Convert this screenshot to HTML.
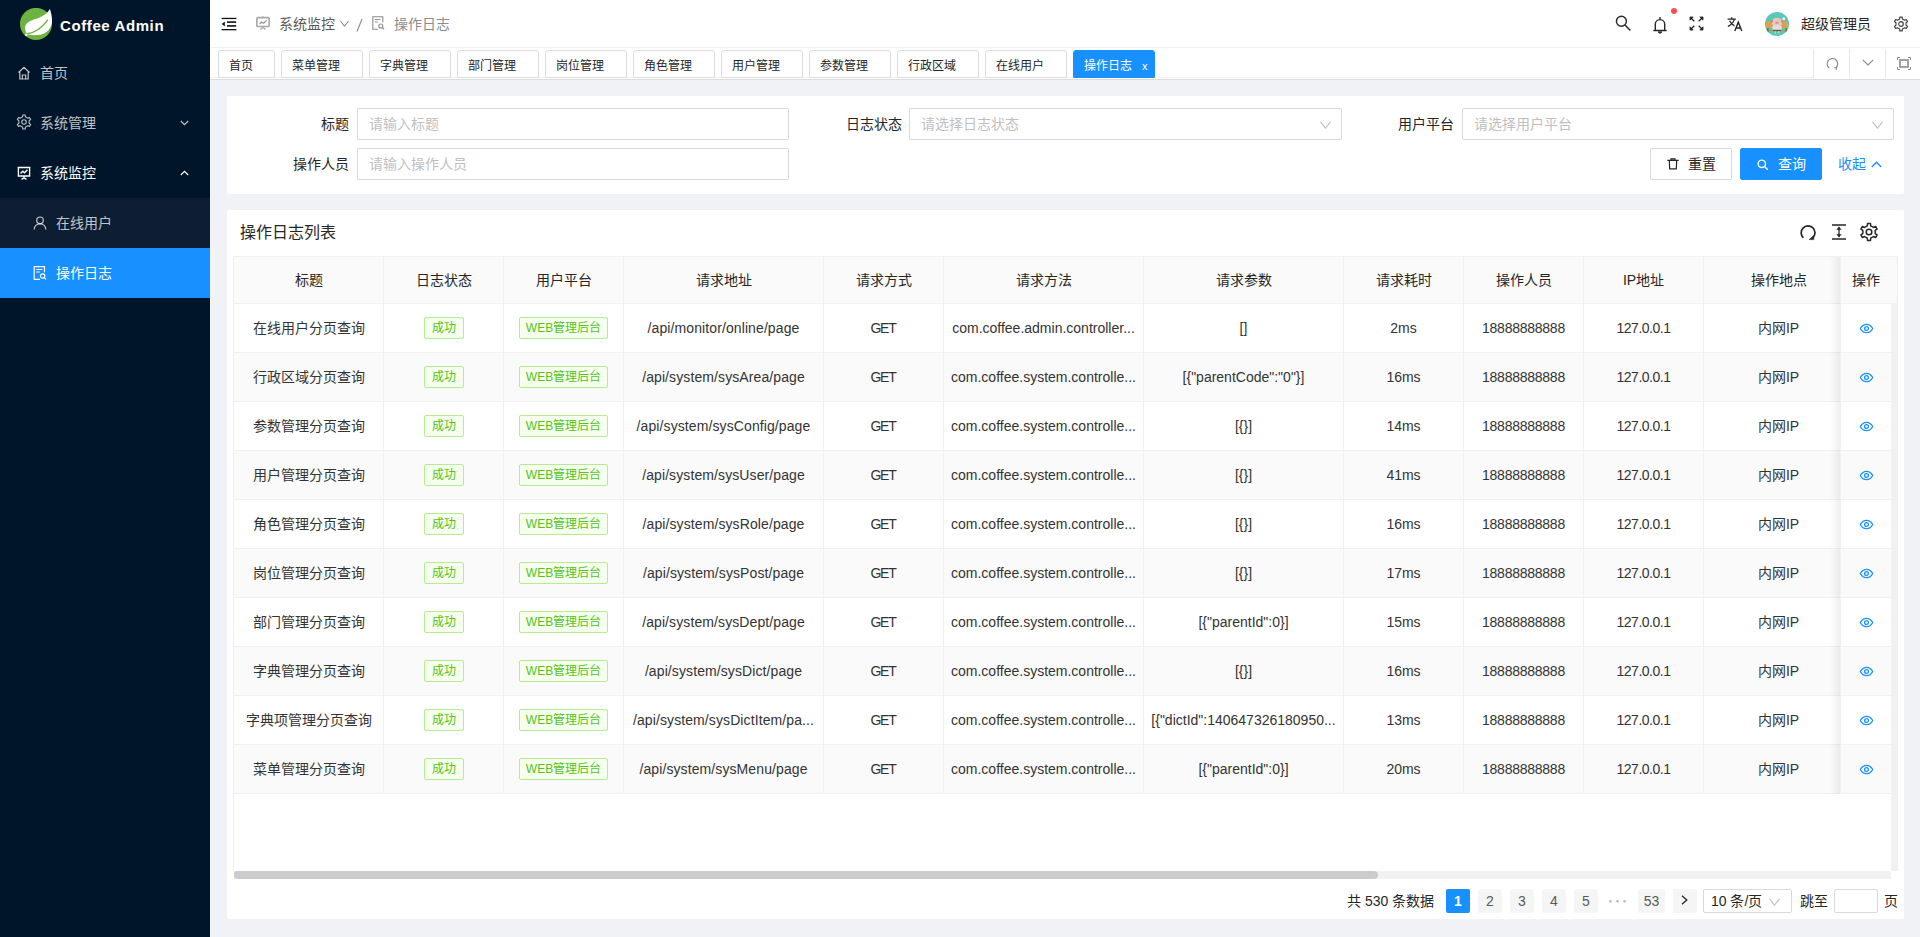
<!DOCTYPE html>
<html lang="zh-CN">
<head>
<meta charset="utf-8">
<style>
*{box-sizing:border-box;margin:0;padding:0}
html,body{width:1920px;height:937px;overflow:hidden}
body{font-family:"Liberation Sans",sans-serif;font-size:14px;color:#262626;background:#f0f2f5;position:relative}
.abs{position:absolute}
svg{display:block}
/* sidebar */
#side{position:absolute;left:0;top:0;width:210px;height:937px;background:#001529}
.logo-t{position:absolute;left:60px;top:16px;color:#fff;font-weight:bold;font-size:15px;line-height:20px;letter-spacing:0.6px;white-space:nowrap}
.mi{position:absolute;left:0;width:210px;height:50px;color:rgba(255,255,255,.75);line-height:50px}
.mi .ic{position:absolute;left:17px;top:18px}
.mi .tx{position:absolute;left:40px;top:0}
.mi .ar{position:absolute;left:180px;top:22px}
.sub{background:#0d1e33}
.sub .ic{left:33px}
.sub .tx{left:56px}
.sel{background:#1890ff;color:#fff}
/* header */
#hdr{position:absolute;left:210px;top:0;width:1710px;height:48px;background:#fff;border-bottom:1px solid #f0f0f0}
#tabs{position:absolute;left:210px;top:48px;width:1710px;height:32px;background:#fff;border-bottom:1px solid #dcdcdc}
.tab{position:absolute;top:2px;height:28px;border:1px solid #dcdcdc;border-radius:3px 3px 2px 2px;background:#fff;line-height:31px;padding-left:10px;font-size:12px;color:#262626}
.tab.act{background:#1890ff;border-color:#1890ff;color:#fff;border-radius:3px 3px 0 0}
.tsep{position:absolute;top:1px;width:1px;height:29px;background:#e8e8e8}
/* cards */
.card{position:absolute;background:#fff;border-radius:2px}
.lbl{position:absolute;height:32px;line-height:32px;text-align:right;color:#262626}
.inp{position:absolute;height:32px;border:1px solid #d9d9d9;border-radius:2px;background:#fff;line-height:30px;padding-left:11px;color:#bfbfbf}
.btn{position:absolute;height:32px;border:1px solid #d9d9d9;border-radius:2px;background:#fff;line-height:30px;text-align:center}
/* table */
#tbl{position:absolute;left:233px;top:256px;width:1665px;height:615px;border-left:1px solid #f0f0f0;border-top:1px solid #f0f0f0}
.row{position:absolute;left:0;height:49px;border-bottom:1px solid #f0f0f0;color:#333}
.cell{position:absolute;top:0;height:48px;line-height:48px;text-align:center;border-right:1px solid #f0f0f0;white-space:nowrap;overflow:hidden}
.hrow .cell{background:#fafafa;color:#262626}
.tag{display:inline-block;height:22px;line-height:20px;border:1px solid #b7eb8f;background:#f6ffed;color:#52c41a;font-size:12px;padding:0 7px;border-radius:2px;vertical-align:middle;position:relative;top:-1px}.tw{padding:0 6px}
.t-url{letter-spacing:0.1px}.t-ip{letter-spacing:-0.5px}.t-ph{letter-spacing:-0.25px}.t-get{letter-spacing:-1.2px;margin-right:1px}
.pg{position:absolute;top:889px;height:24px;line-height:24px;text-align:center;background:#f5f5f5;border-radius:2px;color:#595959}
</style>
</head>
<body>
<!-- SIDEBAR -->
<div id="side">
  <svg class="abs" style="left:20px;top:8px" width="34" height="34" viewBox="0 0 34 34">
    <circle cx="16" cy="15.9" r="16" fill="#6db33f"/>
    <path d="M29.8 1.1 C27 6 23 8.5 17 10.5 C10 12.5 5 15 5 20 C5 23 6.2 25 8 26.6 C14 27.6 21 27.4 25 25 C30 22 32.4 17 32 11 C31.7 7 30.8 3.5 29.8 1.1Z" fill="#fff"/>
    <path d="M7.3 25.8 Q18.5 24.5 27.6 12.2" fill="none" stroke="#6db33f" stroke-width="1.4" stroke-linecap="round"/>
    <circle cx="6.3" cy="26.8" r="1.3" fill="#fff"/>
  </svg>
  <div class="logo-t">Coffee Admin</div>

  <div class="mi" style="top:48px">
    <svg class="ic" width="14" height="14" viewBox="0 0 14 14" fill="none" stroke="currentColor" stroke-width="1.2"><path d="M1.5 6.5 L7 1.3 L12.5 6.5 M2.8 5.4 V13 H11.2 V5.4 M5.3 13 V9 H8.7 V13"/></svg>
    <span class="tx">首页</span>
  </div>
  <div class="mi" style="top:98px">
    <svg class="ic" style="left:16px;top:16px" width="16" height="16" viewBox="0 0 16 16" fill="none" stroke="currentColor" stroke-width="1.1" stroke-linejoin="round"><circle cx="8" cy="8" r="2.2"/><path d="M6.60 2.89 L6.78 1.01 L9.22 1.01 L9.40 2.89 L11.73 4.23 L13.45 3.45 L14.67 5.56 L13.13 6.66 L13.13 9.34 L14.67 10.44 L13.45 12.55 L11.73 11.77 L9.40 13.11 L9.22 14.99 L6.78 14.99 L6.60 13.11 L4.27 11.77 L2.55 12.55 L1.33 10.44 L2.87 9.34 L2.87 6.66 L1.33 5.56 L2.55 3.45 L4.27 4.23Z"/></svg>
    <span class="tx">系统管理</span>
    <svg class="ar" width="9" height="6" viewBox="0 0 9 6" fill="none" stroke="currentColor" stroke-width="1.2"><path d="M0.8 1 L4.5 4.6 L8.2 1"/></svg>
  </div>
  <div class="mi" style="top:148px;color:#fff">
    <svg class="ic" width="14" height="14" viewBox="0 0 14 14" fill="none" stroke="currentColor" stroke-width="1.35"><path d="M0.6 1.5h12.8 M1.4 1.5v8.5h11.2V1.5 M7 10v1.8 M4.5 13.3l2.5-1.5 2.5 1.5 M3.5 7.5l2.3-2.3 1.7 1.5 3-3"/></svg>
    <span class="tx">系统监控</span>
    <svg class="ar" width="9" height="6" viewBox="0 0 9 6" fill="none" stroke="currentColor" stroke-width="1.2"><path d="M0.8 5 L4.5 1.4 L8.2 5"/></svg>
  </div>
  <div class="mi sub" style="top:198px">
    <svg class="ic" width="14" height="14" viewBox="0 0 14 14" fill="none" stroke="currentColor" stroke-width="1.2"><circle cx="7" cy="4.3" r="3.3"/><path d="M1.2 13.4c0-3.3 2.6-5.6 5.8-5.6s5.8 2.3 5.8 5.6"/></svg>
    <span class="tx">在线用户</span>
  </div>
  <div class="mi sub sel" style="top:248px">
    <svg class="ic" width="14" height="14" viewBox="0 0 14 14" fill="none" stroke="currentColor" stroke-width="1.2"><path d="M7 13.3H1.2V0.7h10.3v5.5 M3.3 3.5h6 M3.3 6h3.5"/><circle cx="9.6" cy="10" r="2.2"/><path d="M11.2 11.6l1.8 1.8"/></svg>
    <span class="tx">操作日志</span>
  </div>
</div>

<!-- HEADER -->
<div id="hdr">
  <svg class="abs" style="left:11px;top:17px" width="16" height="14" viewBox="0 0 16 14" fill="#111"><rect x="0.6" y="0.8" width="14.8" height="1.3"/><rect x="6" y="4.3" width="9.2" height="1.6"/><rect x="6" y="8.1" width="9.2" height="1.6"/><rect x="0.6" y="12" width="14.8" height="1.3"/><path d="M0.8 7 L3.8 4.5 V9.5Z"/></svg>
  <svg class="abs" style="left:46px;top:16px" width="14" height="15" viewBox="0 0 14 15" fill="none" stroke="#a6a6a6"><path d="M7 0.2v1.4" stroke-width="1.3"/><rect x="0.9" y="1.6" width="12.2" height="8.9" rx="0.8" stroke-width="1.6"/><path d="M3.5 8.2 L5.6 6 L7.6 7.3 L10.6 4.3" stroke-width="1.2" stroke="#8c8c8c"/><path d="M7 10.5v1 M4.3 13.6 L7 11.6 L9.7 13.6" stroke-width="1.2"/></svg>
  <span class="abs" style="left:69px;top:1px;line-height:47px;color:#595959">系统监控</span>
  <svg class="abs" style="left:130px;top:20px;color:#8c8c8c" width="9" height="7" viewBox="0 0 9 7" fill="none" stroke="currentColor" stroke-width="1.1"><path d="M0.5 1 L4.5 6 L8.5 1"/></svg>
  <svg class="abs" style="left:146px;top:18px" width="7" height="14" viewBox="0 0 7 14" fill="none" stroke="#8c8c8c" stroke-width="1.1"><path d="M1 13.5 L6 1"/></svg>
  <svg class="abs" style="left:162px;top:16px;color:#8c8c8c" width="13" height="14" viewBox="0 0 13 14" fill="none" stroke="currentColor" stroke-width="1.1"><path d="M6 13.3H0.8V0.7h10v5.5 M2.8 3.5h5.5 M2.8 6h3"/><circle cx="8.8" cy="10" r="2"/><path d="M10.3 11.5l1.8 1.8"/></svg>
  <span class="abs" style="left:184px;top:1px;line-height:47px;color:#8c8c8c">操作日志</span>

  <svg class="abs" style="left:1405px;top:15px" width="16" height="17" viewBox="0 0 16 17" fill="none" stroke="#262626" stroke-width="1.4"><circle cx="6.4" cy="6.3" r="5"/><path d="M10 9.9 L15.3 15.5"/></svg>
  <svg class="abs" style="left:1443px;top:16px" width="14" height="18" viewBox="0 0 14 18" fill="none" stroke="#262626" stroke-width="1.4"><path d="M2.3 14.3V8.3a4.7 4.7 0 0 1 9.4 0v6 M0.4 14.5h13.2"/><path d="M5.6 15.6a1.4 1.4 0 0 0 2.8 0" fill="#262626"/><path d="M7 1.1v2"/></svg>
  <span class="abs" style="left:1461px;top:8px;width:6px;height:6px;border-radius:3px;background:#ff4d4f"></span>
  <svg class="abs" style="left:1479px;top:16px" width="15" height="15" viewBox="0 0 15 15" fill="none" stroke="#262626" stroke-width="1.3"><path d="M5.3 5.3 L1.2 1.2 M9.7 5.3 L13.8 1.2 M5.3 9.7 L1.2 13.8 M9.7 9.7 L13.8 13.8"/><path d="M1 4.2V1h3.2Z M14 4.2V1h-3.2Z M1 10.8V14h3.2Z M14 10.8V14h-3.2Z" fill="#262626" stroke-width="0.8"/></svg>
  <svg class="abs" style="left:1517px;top:17px" width="16" height="15" viewBox="0 0 16 15" fill="none" stroke="#262626" stroke-width="1.3"><path d="M4.6 0.3v1.6 M0.6 2.2h8.2 M7.2 2.6C6.2 5.6 4 8 0.9 9.4 M2.6 3.8c1.1 2.3 2.8 4 4.8 5"/><path d="M7.8 14 L11.3 5.2 L14.8 14 M9 11h4.6" stroke-width="1.4"/></svg>
  <span class="abs" style="left:1555px;top:12px;width:24px;height:24px;border-radius:12px;overflow:hidden"><svg width="24" height="24" viewBox="0 0 24 24"><g>
    <rect width="24" height="24" fill="#5cc7b6"/>
    <rect x="1" y="9.5" width="22" height="6.5" fill="#d9a24e"/>
    <rect x="1" y="18" width="22" height="1" fill="#c9913f"/>
    <rect x="2.5" y="16" width="0.8" height="4.5" fill="#4a3b30"/><rect x="20.7" y="16" width="0.8" height="4.5" fill="#4a3b30"/>
    <ellipse cx="12" cy="10.5" rx="5.2" ry="4.8" fill="#e9c9bd"/>
    <ellipse cx="12" cy="10.8" rx="2" ry="1.2" fill="#d99a98"/>
    <ellipse cx="6.8" cy="9.3" rx="1.2" ry="1.5" fill="#c98a78"/><ellipse cx="17.2" cy="9.3" rx="1.2" ry="1.5" fill="#c98a78"/>
    <rect x="7.3" y="13.3" width="9.4" height="5" rx="2" fill="#dedede"/>
    <rect x="8" y="17.8" width="8" height="1.4" fill="#6b5646"/>
    <rect x="9.6" y="19.2" width="1.2" height="2.4" fill="#e6d0c6"/><rect x="13.2" y="19.2" width="1.2" height="2.4" fill="#e6d0c6"/>
    <circle cx="18.7" cy="6.8" r="1.5" fill="#eef3ef"/>
  </g></svg></span>
  <span class="abs" style="left:1591px;top:1px;line-height:47px;color:#262626">超级管理员</span>
  <svg class="abs" style="left:1683px;top:16px" width="16" height="16" viewBox="0 0 16 16" fill="none" stroke="#434343" stroke-width="1.2" stroke-linejoin="round"><circle cx="8" cy="8" r="2.3"/><path d="M6.63 2.98 L6.80 1.10 L9.20 1.10 L9.37 2.98 L11.66 4.30 L13.37 3.51 L14.57 5.59 L13.03 6.68 L13.03 9.32 L14.57 10.41 L13.37 12.49 L11.66 11.70 L9.37 13.02 L9.20 14.90 L6.80 14.90 L6.63 13.02 L4.34 11.70 L2.63 12.49 L1.43 10.41 L2.97 9.32 L2.97 6.68 L1.43 5.59 L2.63 3.51 L4.34 4.30Z"/></svg>
</div>
<!-- TABS -->
<div id="tabs">
  <div class="abs" style="left:0;top:29px;width:1603px;height:1px;background:#f0f0f0"></div>
  <div class="tab" style="left:8px;width:57px">首页</div>
  <div class="tab" style="left:71px;width:82px">菜单管理</div>
  <div class="tab" style="left:159px;width:82px">字典管理</div>
  <div class="tab" style="left:247px;width:82px">部门管理</div>
  <div class="tab" style="left:335px;width:82px">岗位管理</div>
  <div class="tab" style="left:423px;width:82px">角色管理</div>
  <div class="tab" style="left:511px;width:82px">用户管理</div>
  <div class="tab" style="left:599px;width:82px">参数管理</div>
  <div class="tab" style="left:687px;width:82px">行政区域</div>
  <div class="tab" style="left:775px;width:82px">在线用户</div>
  <div class="tab act" style="left:863px;width:82px">操作日志<span class="abs" style="left:68px;top:1px;font-size:11px;line-height:29px">x</span></div>
  <div class="tsep" style="left:1603px"></div><div class="tsep" style="left:1639px"></div><div class="tsep" style="left:1675px"></div>
  <svg class="abs" style="left:1616px;top:9px" width="13" height="13" viewBox="0 0 13 13" fill="none" stroke="#8c8c8c" stroke-width="1.2"><path d="M10.5 10.2 A5.3 5.3 0 1 0 3.2 11"/><path d="M8.3 10.8 L10.6 10.4 L10.3 12.6" fill="none"/></svg>
  <svg class="abs" style="left:1652px;top:11px" width="12" height="7" viewBox="0 0 12 7" fill="none" stroke="#8c8c8c" stroke-width="1.2"><path d="M0.8 0.8 L6 6 L11.2 0.8"/></svg>
  <svg class="abs" style="left:1687px;top:9px" width="14" height="13" viewBox="0 0 14 13" fill="none" stroke="#8c8c8c" stroke-width="1"><path d="M0.5 3V0.5H3 M11 0.5h2.5V3 M0.5 10v2.5H3 M11 12.5h2.5V10"/><rect x="3" y="3" width="8" height="7" stroke-width="1.6"/></svg>
</div>

<!-- SEARCH CARD -->
<div class="card" style="left:227px;top:96px;width:1677px;height:98px">
  <div class="lbl" style="left:60px;top:12px;width:62px">标题</div>
  <div class="inp" style="left:130px;top:12px;width:432px">请输入标题</div>
  <div class="lbl" style="left:580px;top:12px;width:95px">日志状态</div>
  <div class="inp" style="left:682px;top:12px;width:433px">请选择日志状态
    <svg class="abs" style="left:410px;top:12px" width="11" height="8" viewBox="0 0 11 8" fill="none" stroke="#bfbfbf" stroke-width="1.1"><path d="M0.5 0.8 L5.5 7 L10.5 0.8"/></svg></div>
  <div class="lbl" style="left:1130px;top:12px;width:97px">用户平台</div>
  <div class="inp" style="left:1235px;top:12px;width:432px">请选择用户平台
    <svg class="abs" style="left:409px;top:12px" width="11" height="8" viewBox="0 0 11 8" fill="none" stroke="#bfbfbf" stroke-width="1.1"><path d="M0.5 0.8 L5.5 7 L10.5 0.8"/></svg></div>
  <div class="lbl" style="left:40px;top:52px;width:82px">操作人员</div>
  <div class="inp" style="left:130px;top:52px;width:432px">请输入操作人员</div>
  <div class="btn" style="left:1423px;top:52px;width:82px">
    <svg class="abs" style="left:16px;top:9px" width="12" height="12" viewBox="0 0 12 12" fill="none" stroke="#262626" stroke-width="1.2"><path d="M0.3 2.4h11.4 M4 2.4V0.9h4v1.5 M2.3 2.4l.4 8.4h6.6l.4-8.4"/></svg>
    <span class="abs" style="left:37px;top:0">重置</span></div>
  <div class="btn" style="left:1513px;top:52px;width:82px;background:#1890ff;border-color:#1890ff;color:#fff">
    <svg class="abs" style="left:16px;top:10px" width="12" height="12" viewBox="0 0 12 12" fill="none" stroke="#fff" stroke-width="1.4"><circle cx="4.8" cy="4.8" r="3.7"/><path d="M7.6 7.6 L10.8 10.8"/></svg>
    <span class="abs" style="left:37px;top:0">查询</span></div>
  <span class="abs" style="left:1611px;top:52px;line-height:32px;color:#1890ff">收起</span>
  <svg class="abs" style="left:1644px;top:65px" width="11" height="7" viewBox="0 0 11 7" fill="none" stroke="#1890ff" stroke-width="1.4"><path d="M0.8 6 L5.5 1.2 L10.2 6"/></svg>
</div>

<!-- TABLE CARD -->
<div class="card" style="left:227px;top:210px;width:1677px;height:709px">
  <span class="abs" style="left:13px;top:11px;font-size:16px;line-height:24px;color:#262626">操作日志列表</span>
  <svg class="abs" style="left:1572px;top:14px" width="18" height="17" viewBox="0 0 18 17" fill="none" stroke="#262626" stroke-width="1.7"><path d="M4.3 13.8 A6.9 6.9 0 1 1 14.2 13.4"/><path d="M10.2 15.6 L14.8 15.6 L14.6 11.5Z" fill="#262626" stroke-width="0.6"/></svg>
  <svg class="abs" style="left:1604px;top:13px" width="16" height="18" viewBox="0 0 16 18" fill="none" stroke="#262626" stroke-width="1.6"><path d="M1 2h14 M1 16h14"/><path d="M8 5v8" stroke-width="1.3"/><path d="M6 6.5 L8 3.8 L10 6.5Z M6 11.5 L8 14.2 L10 11.5Z" fill="#262626" stroke-width="0.6"/></svg>
  <svg class="abs" style="left:1632px;top:12px" width="20" height="20" viewBox="0 0 20 20" fill="none" stroke="#262626" stroke-width="1.5" stroke-linejoin="round"><circle cx="10" cy="10" r="2.8"/><path d="M8.31 3.83 L8.52 1.53 L11.48 1.53 L11.69 3.83 L14.50 5.45 L16.60 4.48 L18.08 7.04 L16.19 8.38 L16.19 11.62 L18.08 12.96 L16.60 15.52 L14.50 14.55 L11.69 16.17 L11.48 18.47 L8.52 18.47 L8.31 16.17 L5.50 14.55 L3.40 15.52 L1.92 12.96 L3.81 11.62 L3.81 8.38 L1.92 7.04 L3.40 4.48 L5.50 5.45Z"/></svg>
</div>
<div id="tbl">
<div class="hrow" style="position:absolute;left:0;top:0;width:1663px;height:47px;background:#fafafa;border-bottom:1px solid #f0f0f0">
<div class="cell" style="left:0px;width:150px;height:46px;line-height:46px">标题</div>
<div class="cell" style="left:150px;width:120px;height:46px;line-height:46px">日志状态</div>
<div class="cell" style="left:270px;width:120px;height:46px;line-height:46px">用户平台</div>
<div class="cell" style="left:390px;width:200px;height:46px;line-height:46px">请求地址</div>
<div class="cell" style="left:590px;width:120px;height:46px;line-height:46px">请求方式</div>
<div class="cell" style="left:710px;width:200px;height:46px;line-height:46px">请求方法</div>
<div class="cell" style="left:910px;width:200px;height:46px;line-height:46px">请求参数</div>
<div class="cell" style="left:1110px;width:120px;height:46px;line-height:46px">请求耗时</div>
<div class="cell" style="left:1230px;width:120px;height:46px;line-height:46px">操作人员</div>
<div class="cell" style="left:1350px;width:120px;height:46px;line-height:46px">IP地址</div>
<div class="cell" style="left:1470px;width:150px;height:46px;line-height:46px">操作地点</div>
</div>
<div class="row" style="top:47px;width:1656px;background:#fff">
<div class="cell" style="left:0px;width:150px">在线用户分页查询</div>
<div class="cell" style="left:150px;width:120px"><span class="tag">成功</span></div>
<div class="cell" style="left:270px;width:120px"><span class="tag tw">WEB管理后台</span></div>
<div class="cell" style="left:390px;width:200px"><span class="t-url">/api/monitor/online/page</span></div>
<div class="cell" style="left:590px;width:120px"><span class="t-get">GET</span></div>
<div class="cell" style="left:710px;width:200px"><span class="t-m">com.coffee.admin.controller...</span></div>
<div class="cell" style="left:910px;width:200px"><span class="t-p">[]</span></div>
<div class="cell" style="left:1110px;width:120px">2ms</div>
<div class="cell" style="left:1230px;width:120px"><span class="t-ph">18888888888</span></div>
<div class="cell" style="left:1350px;width:120px"><span class="t-ip">127.0.0.1</span></div>
<div class="cell" style="left:1470px;width:150px">内网IP</div>
</div>
<div class="row" style="top:96px;width:1656px;background:#fafafa">
<div class="cell" style="left:0px;width:150px">行政区域分页查询</div>
<div class="cell" style="left:150px;width:120px"><span class="tag">成功</span></div>
<div class="cell" style="left:270px;width:120px"><span class="tag tw">WEB管理后台</span></div>
<div class="cell" style="left:390px;width:200px"><span class="t-url">/api/system/sysArea/page</span></div>
<div class="cell" style="left:590px;width:120px"><span class="t-get">GET</span></div>
<div class="cell" style="left:710px;width:200px"><span class="t-m">com.coffee.system.controlle...</span></div>
<div class="cell" style="left:910px;width:200px"><span class="t-p">[{&quot;parentCode&quot;:&quot;0&quot;}]</span></div>
<div class="cell" style="left:1110px;width:120px">16ms</div>
<div class="cell" style="left:1230px;width:120px"><span class="t-ph">18888888888</span></div>
<div class="cell" style="left:1350px;width:120px"><span class="t-ip">127.0.0.1</span></div>
<div class="cell" style="left:1470px;width:150px">内网IP</div>
</div>
<div class="row" style="top:145px;width:1656px;background:#fff">
<div class="cell" style="left:0px;width:150px">参数管理分页查询</div>
<div class="cell" style="left:150px;width:120px"><span class="tag">成功</span></div>
<div class="cell" style="left:270px;width:120px"><span class="tag tw">WEB管理后台</span></div>
<div class="cell" style="left:390px;width:200px"><span class="t-url">/api/system/sysConfig/page</span></div>
<div class="cell" style="left:590px;width:120px"><span class="t-get">GET</span></div>
<div class="cell" style="left:710px;width:200px"><span class="t-m">com.coffee.system.controlle...</span></div>
<div class="cell" style="left:910px;width:200px"><span class="t-p">[{}]</span></div>
<div class="cell" style="left:1110px;width:120px">14ms</div>
<div class="cell" style="left:1230px;width:120px"><span class="t-ph">18888888888</span></div>
<div class="cell" style="left:1350px;width:120px"><span class="t-ip">127.0.0.1</span></div>
<div class="cell" style="left:1470px;width:150px">内网IP</div>
</div>
<div class="row" style="top:194px;width:1656px;background:#fafafa">
<div class="cell" style="left:0px;width:150px">用户管理分页查询</div>
<div class="cell" style="left:150px;width:120px"><span class="tag">成功</span></div>
<div class="cell" style="left:270px;width:120px"><span class="tag tw">WEB管理后台</span></div>
<div class="cell" style="left:390px;width:200px"><span class="t-url">/api/system/sysUser/page</span></div>
<div class="cell" style="left:590px;width:120px"><span class="t-get">GET</span></div>
<div class="cell" style="left:710px;width:200px"><span class="t-m">com.coffee.system.controlle...</span></div>
<div class="cell" style="left:910px;width:200px"><span class="t-p">[{}]</span></div>
<div class="cell" style="left:1110px;width:120px">41ms</div>
<div class="cell" style="left:1230px;width:120px"><span class="t-ph">18888888888</span></div>
<div class="cell" style="left:1350px;width:120px"><span class="t-ip">127.0.0.1</span></div>
<div class="cell" style="left:1470px;width:150px">内网IP</div>
</div>
<div class="row" style="top:243px;width:1656px;background:#fff">
<div class="cell" style="left:0px;width:150px">角色管理分页查询</div>
<div class="cell" style="left:150px;width:120px"><span class="tag">成功</span></div>
<div class="cell" style="left:270px;width:120px"><span class="tag tw">WEB管理后台</span></div>
<div class="cell" style="left:390px;width:200px"><span class="t-url">/api/system/sysRole/page</span></div>
<div class="cell" style="left:590px;width:120px"><span class="t-get">GET</span></div>
<div class="cell" style="left:710px;width:200px"><span class="t-m">com.coffee.system.controlle...</span></div>
<div class="cell" style="left:910px;width:200px"><span class="t-p">[{}]</span></div>
<div class="cell" style="left:1110px;width:120px">16ms</div>
<div class="cell" style="left:1230px;width:120px"><span class="t-ph">18888888888</span></div>
<div class="cell" style="left:1350px;width:120px"><span class="t-ip">127.0.0.1</span></div>
<div class="cell" style="left:1470px;width:150px">内网IP</div>
</div>
<div class="row" style="top:292px;width:1656px;background:#fafafa">
<div class="cell" style="left:0px;width:150px">岗位管理分页查询</div>
<div class="cell" style="left:150px;width:120px"><span class="tag">成功</span></div>
<div class="cell" style="left:270px;width:120px"><span class="tag tw">WEB管理后台</span></div>
<div class="cell" style="left:390px;width:200px"><span class="t-url">/api/system/sysPost/page</span></div>
<div class="cell" style="left:590px;width:120px"><span class="t-get">GET</span></div>
<div class="cell" style="left:710px;width:200px"><span class="t-m">com.coffee.system.controlle...</span></div>
<div class="cell" style="left:910px;width:200px"><span class="t-p">[{}]</span></div>
<div class="cell" style="left:1110px;width:120px">17ms</div>
<div class="cell" style="left:1230px;width:120px"><span class="t-ph">18888888888</span></div>
<div class="cell" style="left:1350px;width:120px"><span class="t-ip">127.0.0.1</span></div>
<div class="cell" style="left:1470px;width:150px">内网IP</div>
</div>
<div class="row" style="top:341px;width:1656px;background:#fff">
<div class="cell" style="left:0px;width:150px">部门管理分页查询</div>
<div class="cell" style="left:150px;width:120px"><span class="tag">成功</span></div>
<div class="cell" style="left:270px;width:120px"><span class="tag tw">WEB管理后台</span></div>
<div class="cell" style="left:390px;width:200px"><span class="t-url">/api/system/sysDept/page</span></div>
<div class="cell" style="left:590px;width:120px"><span class="t-get">GET</span></div>
<div class="cell" style="left:710px;width:200px"><span class="t-m">com.coffee.system.controlle...</span></div>
<div class="cell" style="left:910px;width:200px"><span class="t-p">[{&quot;parentId&quot;:0}]</span></div>
<div class="cell" style="left:1110px;width:120px">15ms</div>
<div class="cell" style="left:1230px;width:120px"><span class="t-ph">18888888888</span></div>
<div class="cell" style="left:1350px;width:120px"><span class="t-ip">127.0.0.1</span></div>
<div class="cell" style="left:1470px;width:150px">内网IP</div>
</div>
<div class="row" style="top:390px;width:1656px;background:#fafafa">
<div class="cell" style="left:0px;width:150px">字典管理分页查询</div>
<div class="cell" style="left:150px;width:120px"><span class="tag">成功</span></div>
<div class="cell" style="left:270px;width:120px"><span class="tag tw">WEB管理后台</span></div>
<div class="cell" style="left:390px;width:200px"><span class="t-url">/api/system/sysDict/page</span></div>
<div class="cell" style="left:590px;width:120px"><span class="t-get">GET</span></div>
<div class="cell" style="left:710px;width:200px"><span class="t-m">com.coffee.system.controlle...</span></div>
<div class="cell" style="left:910px;width:200px"><span class="t-p">[{}]</span></div>
<div class="cell" style="left:1110px;width:120px">16ms</div>
<div class="cell" style="left:1230px;width:120px"><span class="t-ph">18888888888</span></div>
<div class="cell" style="left:1350px;width:120px"><span class="t-ip">127.0.0.1</span></div>
<div class="cell" style="left:1470px;width:150px">内网IP</div>
</div>
<div class="row" style="top:439px;width:1656px;background:#fff">
<div class="cell" style="left:0px;width:150px">字典项管理分页查询</div>
<div class="cell" style="left:150px;width:120px"><span class="tag">成功</span></div>
<div class="cell" style="left:270px;width:120px"><span class="tag tw">WEB管理后台</span></div>
<div class="cell" style="left:390px;width:200px"><span class="t-url">/api/system/sysDictItem/pa...</span></div>
<div class="cell" style="left:590px;width:120px"><span class="t-get">GET</span></div>
<div class="cell" style="left:710px;width:200px"><span class="t-m">com.coffee.system.controlle...</span></div>
<div class="cell" style="left:910px;width:200px"><span class="t-p">[{&quot;dictId&quot;:140647326180950...</span></div>
<div class="cell" style="left:1110px;width:120px">13ms</div>
<div class="cell" style="left:1230px;width:120px"><span class="t-ph">18888888888</span></div>
<div class="cell" style="left:1350px;width:120px"><span class="t-ip">127.0.0.1</span></div>
<div class="cell" style="left:1470px;width:150px">内网IP</div>
</div>
<div class="row" style="top:488px;width:1656px;background:#fafafa">
<div class="cell" style="left:0px;width:150px">菜单管理分页查询</div>
<div class="cell" style="left:150px;width:120px"><span class="tag">成功</span></div>
<div class="cell" style="left:270px;width:120px"><span class="tag tw">WEB管理后台</span></div>
<div class="cell" style="left:390px;width:200px"><span class="t-url">/api/system/sysMenu/page</span></div>
<div class="cell" style="left:590px;width:120px"><span class="t-get">GET</span></div>
<div class="cell" style="left:710px;width:200px"><span class="t-m">com.coffee.system.controlle...</span></div>
<div class="cell" style="left:910px;width:200px"><span class="t-p">[{&quot;parentId&quot;:0}]</span></div>
<div class="cell" style="left:1110px;width:120px">20ms</div>
<div class="cell" style="left:1230px;width:120px"><span class="t-ph">18888888888</span></div>
<div class="cell" style="left:1350px;width:120px"><span class="t-ip">127.0.0.1</span></div>
<div class="cell" style="left:1470px;width:150px">内网IP</div>
</div>
<div style="position:absolute;left:1596px;top:0;width:10px;height:537px;background:linear-gradient(to right,rgba(0,0,0,0),rgba(0,0,0,.06))"></div>
<div class="cell" style="left:1606px;top:0;width:58px;height:46px;line-height:46px;background:#fafafa;border-left:1px solid #f0f0f0;border-right:1px solid #f0f0f0;padding-right:7px">操作</div>
<div style="position:absolute;left:1606px;top:46px;width:58px;height:1px;background:#f0f0f0"></div>
<div class="cell" style="left:1606px;top:47px;width:51px;height:49px;border-bottom:1px solid #f0f0f0;border-left:1px solid #f0f0f0;border-right:0;background:#fff"><svg width="15" height="11" viewBox="-0.5 -0.5 15 11" fill="none" stroke="#1890ff" stroke-width="1.3" style="display:inline-block;vertical-align:middle;margin-top:-2px"><path d="M0.8 5C2.3 2.2 4.5 0.8 7 0.8s4.7 1.4 6.2 4.2C11.7 7.8 9.5 9.2 7 9.2S2.3 7.8 0.8 5Z"/><circle cx="7" cy="5" r="1.9"/></svg></div>
<div class="cell" style="left:1606px;top:96px;width:51px;height:49px;border-bottom:1px solid #f0f0f0;border-left:1px solid #f0f0f0;border-right:0;background:#fafafa"><svg width="15" height="11" viewBox="-0.5 -0.5 15 11" fill="none" stroke="#1890ff" stroke-width="1.3" style="display:inline-block;vertical-align:middle;margin-top:-2px"><path d="M0.8 5C2.3 2.2 4.5 0.8 7 0.8s4.7 1.4 6.2 4.2C11.7 7.8 9.5 9.2 7 9.2S2.3 7.8 0.8 5Z"/><circle cx="7" cy="5" r="1.9"/></svg></div>
<div class="cell" style="left:1606px;top:145px;width:51px;height:49px;border-bottom:1px solid #f0f0f0;border-left:1px solid #f0f0f0;border-right:0;background:#fff"><svg width="15" height="11" viewBox="-0.5 -0.5 15 11" fill="none" stroke="#1890ff" stroke-width="1.3" style="display:inline-block;vertical-align:middle;margin-top:-2px"><path d="M0.8 5C2.3 2.2 4.5 0.8 7 0.8s4.7 1.4 6.2 4.2C11.7 7.8 9.5 9.2 7 9.2S2.3 7.8 0.8 5Z"/><circle cx="7" cy="5" r="1.9"/></svg></div>
<div class="cell" style="left:1606px;top:194px;width:51px;height:49px;border-bottom:1px solid #f0f0f0;border-left:1px solid #f0f0f0;border-right:0;background:#fafafa"><svg width="15" height="11" viewBox="-0.5 -0.5 15 11" fill="none" stroke="#1890ff" stroke-width="1.3" style="display:inline-block;vertical-align:middle;margin-top:-2px"><path d="M0.8 5C2.3 2.2 4.5 0.8 7 0.8s4.7 1.4 6.2 4.2C11.7 7.8 9.5 9.2 7 9.2S2.3 7.8 0.8 5Z"/><circle cx="7" cy="5" r="1.9"/></svg></div>
<div class="cell" style="left:1606px;top:243px;width:51px;height:49px;border-bottom:1px solid #f0f0f0;border-left:1px solid #f0f0f0;border-right:0;background:#fff"><svg width="15" height="11" viewBox="-0.5 -0.5 15 11" fill="none" stroke="#1890ff" stroke-width="1.3" style="display:inline-block;vertical-align:middle;margin-top:-2px"><path d="M0.8 5C2.3 2.2 4.5 0.8 7 0.8s4.7 1.4 6.2 4.2C11.7 7.8 9.5 9.2 7 9.2S2.3 7.8 0.8 5Z"/><circle cx="7" cy="5" r="1.9"/></svg></div>
<div class="cell" style="left:1606px;top:292px;width:51px;height:49px;border-bottom:1px solid #f0f0f0;border-left:1px solid #f0f0f0;border-right:0;background:#fafafa"><svg width="15" height="11" viewBox="-0.5 -0.5 15 11" fill="none" stroke="#1890ff" stroke-width="1.3" style="display:inline-block;vertical-align:middle;margin-top:-2px"><path d="M0.8 5C2.3 2.2 4.5 0.8 7 0.8s4.7 1.4 6.2 4.2C11.7 7.8 9.5 9.2 7 9.2S2.3 7.8 0.8 5Z"/><circle cx="7" cy="5" r="1.9"/></svg></div>
<div class="cell" style="left:1606px;top:341px;width:51px;height:49px;border-bottom:1px solid #f0f0f0;border-left:1px solid #f0f0f0;border-right:0;background:#fff"><svg width="15" height="11" viewBox="-0.5 -0.5 15 11" fill="none" stroke="#1890ff" stroke-width="1.3" style="display:inline-block;vertical-align:middle;margin-top:-2px"><path d="M0.8 5C2.3 2.2 4.5 0.8 7 0.8s4.7 1.4 6.2 4.2C11.7 7.8 9.5 9.2 7 9.2S2.3 7.8 0.8 5Z"/><circle cx="7" cy="5" r="1.9"/></svg></div>
<div class="cell" style="left:1606px;top:390px;width:51px;height:49px;border-bottom:1px solid #f0f0f0;border-left:1px solid #f0f0f0;border-right:0;background:#fafafa"><svg width="15" height="11" viewBox="-0.5 -0.5 15 11" fill="none" stroke="#1890ff" stroke-width="1.3" style="display:inline-block;vertical-align:middle;margin-top:-2px"><path d="M0.8 5C2.3 2.2 4.5 0.8 7 0.8s4.7 1.4 6.2 4.2C11.7 7.8 9.5 9.2 7 9.2S2.3 7.8 0.8 5Z"/><circle cx="7" cy="5" r="1.9"/></svg></div>
<div class="cell" style="left:1606px;top:439px;width:51px;height:49px;border-bottom:1px solid #f0f0f0;border-left:1px solid #f0f0f0;border-right:0;background:#fff"><svg width="15" height="11" viewBox="-0.5 -0.5 15 11" fill="none" stroke="#1890ff" stroke-width="1.3" style="display:inline-block;vertical-align:middle;margin-top:-2px"><path d="M0.8 5C2.3 2.2 4.5 0.8 7 0.8s4.7 1.4 6.2 4.2C11.7 7.8 9.5 9.2 7 9.2S2.3 7.8 0.8 5Z"/><circle cx="7" cy="5" r="1.9"/></svg></div>
<div class="cell" style="left:1606px;top:488px;width:51px;height:49px;border-bottom:1px solid #f0f0f0;border-left:1px solid #f0f0f0;border-right:0;background:#fafafa"><svg width="15" height="11" viewBox="-0.5 -0.5 15 11" fill="none" stroke="#1890ff" stroke-width="1.3" style="display:inline-block;vertical-align:middle;margin-top:-2px"><path d="M0.8 5C2.3 2.2 4.5 0.8 7 0.8s4.7 1.4 6.2 4.2C11.7 7.8 9.5 9.2 7 9.2S2.3 7.8 0.8 5Z"/><circle cx="7" cy="5" r="1.9"/></svg></div>
<div style="position:absolute;left:1657px;top:47px;width:7px;height:567px;background:#f1f1f1"></div>
<div style="position:absolute;left:0;top:614px;width:1657px;height:8px;background:#f1f1f1"></div>
<div style="position:absolute;left:0;top:614px;width:1144px;height:8px;background:#cbcbcd;border-radius:3px 4px 4px 3px"></div>
</div>
<!-- PAGINATION -->
<span class="abs" style="left:1347px;top:889px;line-height:24px;color:#262626">共 530 条数据</span>
<div class="pg" style="left:1446px;width:24px;background:#1890ff;color:#fff;font-weight:bold">1</div>
<div class="pg" style="left:1478px;width:24px">2</div>
<div class="pg" style="left:1510px;width:24px">3</div>
<div class="pg" style="left:1542px;width:24px">4</div>
<div class="pg" style="left:1574px;width:24px">5</div>
<svg class="abs" style="left:1606px;top:899px" width="24" height="5" viewBox="0 0 24 5" fill="#bfbfbf"><circle cx="4.5" cy="2.3" r="1.4"/><circle cx="11.6" cy="2.3" r="1.4"/><circle cx="18.6" cy="2.3" r="1.4"/></svg>
<div class="pg" style="left:1638px;width:27px">53</div>
<div class="pg" style="left:1673px;width:24px"><svg class="abs" style="left:8px;top:6px" width="7" height="10" viewBox="0 0 7 10" fill="none" stroke="#262626" stroke-width="1.3"><path d="M1 0.8 L5.8 5 L1 9.2"/></svg></div>
<div class="abs" style="left:1703px;top:889px;width:89px;height:24px;border:1px solid #d9d9d9;border-radius:2px;line-height:22px;padding-left:7px;color:#262626">10 条/页
  <svg class="abs" style="left:65px;top:8px" width="11" height="8" viewBox="0 0 11 8" fill="none" stroke="#bfbfbf" stroke-width="1.1"><path d="M0.5 0.8 L5.5 7 L10.5 0.8"/></svg></div>
<span class="abs" style="left:1800px;top:889px;line-height:24px;color:#262626">跳至</span>
<div class="abs" style="left:1834px;top:889px;width:44px;height:24px;border:1px solid #d9d9d9;border-radius:2px"></div>
<span class="abs" style="left:1884px;top:889px;line-height:24px;color:#262626">页</span>

</body>
</html>
